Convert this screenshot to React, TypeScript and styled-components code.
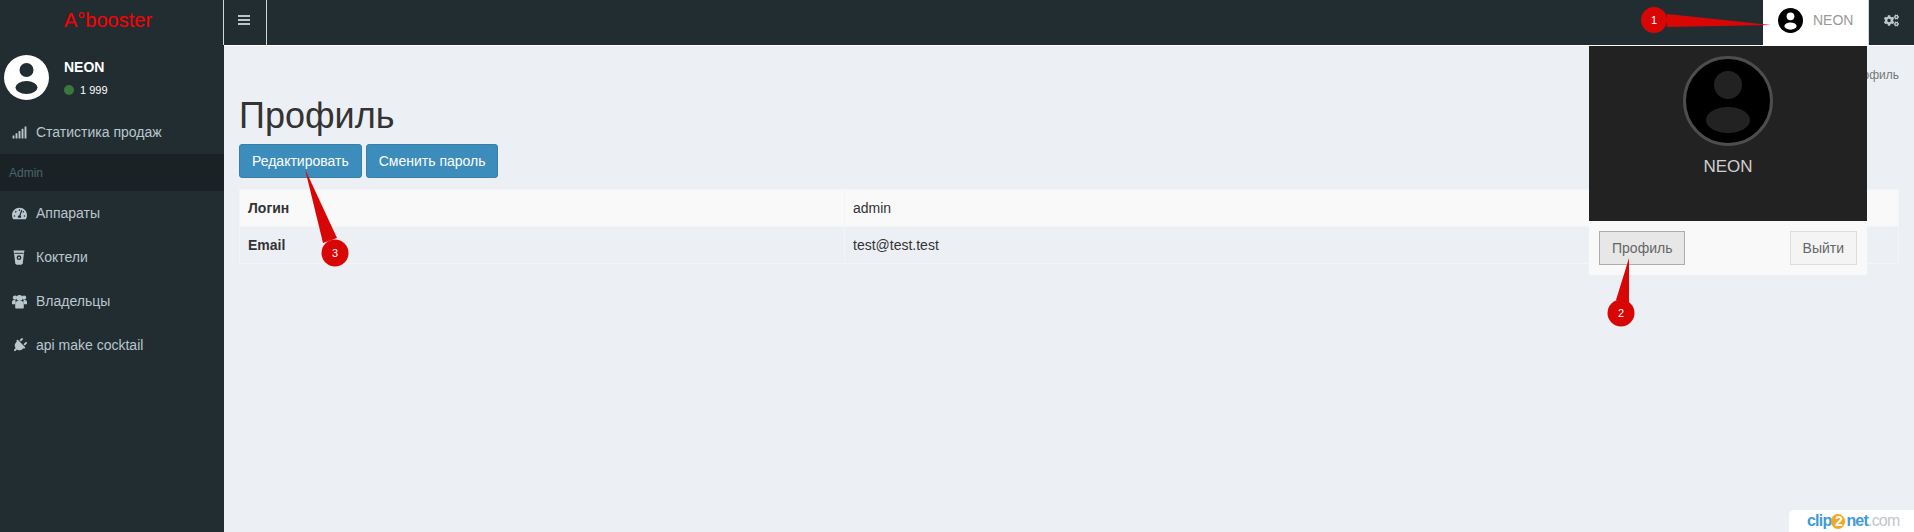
import React from 'react'
import styled, { createGlobalStyle } from 'styled-components'
import { FaCogs, FaPlug, FaSignal, FaTachometerAlt } from 'react-icons/fa'

const GlobalStyle = createGlobalStyle`
  html, body {
    margin: 0;
    padding: 0;
    height: 100%;
    overflow: hidden;
    background: #ecf0f5;
  }
  body {
    font-family: "Liberation Sans", Arial, sans-serif;
    font-size: 14px;
    color: #333;
  }
`

const Page = styled.div`
  position: relative;
  width: 1914px;
  height: 532px;
  display: flex;
  overflow: hidden;
`

const Sidebar = styled.aside`
  width: 224px;
  flex-shrink: 0;
  background: #222d32;
  display: flex;
  flex-direction: column;
`

const Logo = styled.div`
  height: 45px;
  padding-left: 64px;
  padding-bottom: 5px;
  box-sizing: border-box;
  display: flex;
  align-items: center;
  color: #ff0000;
  font-size: 20px;
`

const UserPanel = styled.div`
  height: 65px;
  display: flex;
  padding: 10px 0 0 4px;
  box-sizing: border-box;
  gap: 15px;
`

const UserInfo = styled.div`
  display: flex;
  flex-direction: column;
  padding-top: 4px;
  gap: 8px;
`

const UserName = styled.div`
  color: #fff;
  font-weight: 700;
  font-size: 14px;
  line-height: 16px;
`

const Status = styled.div`
  display: flex;
  align-items: center;
  gap: 6px;
  color: #fff;
  font-size: 11px;
  line-height: 14px;
`

const Dot = styled.span`
  width: 10px;
  height: 10px;
  border-radius: 50%;
  background: #3c763d;
`

const MenuItem = styled.div`
  height: 44px;
  display: flex;
  align-items: center;
  color: #b8c7ce;
  font-size: 14px;
  padding-left: 12px;
  box-sizing: border-box;
`

const MenuIcon = styled.span<{ $tilt?: boolean }>`
  width: 24px;
  flex-shrink: 0;
  display: flex;
  align-items: center;

  svg {
    width: 15px;
    height: 15px;
    fill: #b8c7ce;
    transform: ${p => (p.$tilt ? 'rotate(45deg)' : 'none')};
  }
`

const MenuHeader = styled.div`
  height: 37px;
  background: #1a2226;
  color: #4b646f;
  font-size: 12px;
  padding-left: 9px;
  display: flex;
  align-items: center;
`

const Main = styled.main`
  flex: 1;
  min-width: 0;
  display: flex;
  flex-direction: column;
`

const TopBar = styled.header`
  height: 45px;
  background: #222d32;
  border-bottom: 1px solid #fff;
  display: flex;
  justify-content: space-between;
`

const Toggle = styled.div`
  width: 44px;
  margin-left: -1px;
  box-sizing: border-box;
  border-left: 1px solid #d2d6de;
  border-right: 1px solid #d2d6de;
  display: flex;
  align-items: center;
  justify-content: center;
  padding-bottom: 5px;
  padding-right: 2px;
`

const Burger = styled.span`
  width: 12px;
  height: 10px;
  box-sizing: border-box;
  border-top: 2px solid #b8c7ce;
  border-bottom: 2px solid #b8c7ce;
  position: relative;

  &::after {
    content: '';
    position: absolute;
    left: 0;
    right: 0;
    top: 2px;
    height: 2px;
    background: #b8c7ce;
  }
`

const TopRight = styled.div`
  display: flex;
`

const UserMenu = styled.div`
  width: 105px;
  background: #fff;
  color: #999;
  display: flex;
  align-items: center;
  padding-left: 15px;
  padding-bottom: 5px;
  box-sizing: border-box;
  gap: 10px;
  font-size: 14px;
`

const GearButton = styled.div`
  width: 46px;
  box-sizing: border-box;
  border-left: 1px solid #d2d6de;
  display: flex;
  align-items: center;
  justify-content: center;
  padding-bottom: 5px;
  color: #b8c7ce;

  svg {
    width: 15px;
    height: 15px;
  }
`

const Content = styled.section`
  padding: 22px 15px 0;
  display: flex;
  flex-direction: column;
`

const Breadcrumb = styled.div`
  text-align: right;
  font-size: 12px;
  line-height: 14px;
  color: #777;
`

const Title = styled.h1`
  margin: 14px 0 8px;
  font-size: 36px;
  font-weight: 400;
  line-height: 40px;
  color: #333;
`

const Actions = styled.div`
  display: flex;
  gap: 4px;
  margin-bottom: 11px;
`

const PrimaryButton = styled.button`
  height: 34px;
  padding: 0 12px;
  border: 1px solid #367fa9;
  border-radius: 3px;
  background: #3c8dbc;
  color: #fff;
  font: 14px "Liberation Sans", Arial, sans-serif;
`

const DetailTable = styled.table`
  width: 100%;
  border-collapse: collapse;
  border: 1px solid #f4f4f4;
  table-layout: fixed;
`

const Row = styled.tr<{ $striped?: boolean }>`
  height: 37px;
  background: ${p => (p.$striped ? '#f9f9f9' : 'transparent')};
`

const HeadCell = styled.th`
  width: 588px;
  padding: 0 8px;
  text-align: left;
  font-weight: 700;
  font-size: 14px;
  color: #333;
  border: 1px solid #f4f4f4;
`

const Cell = styled.td`
  padding: 0 8px;
  font-size: 14px;
  color: #333;
  border: 1px solid #f4f4f4;
`

const Dropdown = styled.div`
  position: absolute;
  left: 1589px;
  top: 46px;
  width: 278px;
`

const DropdownHead = styled.div`
  height: 175px;
  background: #222;
  display: flex;
  flex-direction: column;
  align-items: center;
  box-sizing: border-box;
  padding-top: 10px;
`

const DropdownName = styled.div`
  margin-top: 11px;
  font-size: 17px;
  line-height: 20px;
  color: rgba(255, 255, 255, 0.8);
`

const DropdownFoot = styled.div`
  height: 54px;
  background: #f9f9f9;
  padding: 10px;
  box-sizing: border-box;
  display: flex;
  justify-content: space-between;
`

const FlatButton = styled.button<{ $active?: boolean }>`
  height: 34px;
  padding: 0 12px;
  border: 1px solid ${p => (p.$active ? '#adadad' : '#ddd')};
  background: ${p => (p.$active ? '#e7e7e7' : '#f4f4f4')};
  color: #666;
  font: 14px "Liberation Sans", Arial, sans-serif;
`

const Annotations = styled.svg`
  position: absolute;
  left: 0;
  top: 0;
  pointer-events: none;
`

const Watermark = styled.div`
  position: absolute;
  right: 0;
  bottom: 0;
  width: 125px;
  height: 22px;
  background: #fff;
  border-top-left-radius: 5px;
  display: flex;
  align-items: center;
  padding-left: 18px;
  box-sizing: border-box;
  font-size: 16px;
  font-weight: 700;
  letter-spacing: -0.8px;
  color: #3f9bd8;
`

const WatermarkTwo = styled.span`
  width: 14px;
  height: 15px;
  margin: 0 1px 0 0;
  border-radius: 50%;
  background: #f5a623;
  color: #fff;
  font-size: 14px;
  line-height: 15px;
  text-align: center;
`

const WatermarkDomain = styled.span`
  color: #c2c6cc;
  font-weight: 400;
`

function Avatar(props: { size: number; disc: string; figure: string }) {
  return (
    <svg width={props.size} height={props.size} viewBox="0 0 90 90">
      <circle cx="45" cy="45" r="45" fill={props.disc} />
      <circle cx="45" cy="30" r="14" fill={props.figure} />
      <ellipse cx="45" cy="65" rx="22" ry="13" fill={props.figure} />
    </svg>
  )
}

function CupIcon() {
  return (
    <svg viewBox="0 0 15 15">
      <path d="M1.5 0.5h11l-0.6 3-1.2 10.2-1.4 1H4.7l-1.4-1L2.1 3.5z" />
      <circle cx="7" cy="7.7" r="2.4" fill="#222d32" />
      <circle cx="7" cy="7.7" r="1" />
      <rect x="2.5" y="2.8" width="9" height="1" fill="#222d32" />
    </svg>
  )
}

function UsersIcon() {
  return (
    <svg viewBox="0 0 15 15">
      <circle cx="3" cy="3.6" r="2.2" />
      <circle cx="12" cy="3.6" r="2.2" />
      <circle cx="7.5" cy="4" r="3" />
      <path d="M0 10.2V8c0-1.3 1-2 2-2h1.2l0.6 2-1 2.2z" />
      <path d="M15 10.2V8c0-1.3-1-2-2-2h-1.2l-0.6 2 1 2.2z" />
      <path d="M3.2 13.5V9.6c0-1.6 1.2-2.6 2.6-2.6h3.4c1.4 0 2.6 1 2.6 2.6v3.9c0 .6-.5 1-1 1H4.2c-.5 0-1-.4-1-1z" />
    </svg>
  )
}

function Callout(props: { points: string; cx: number; cy: number; r: number; label: string }) {
  return (
    <g>
      <polygon points={props.points} fill="#d90606" />
      <circle cx={props.cx} cy={props.cy} r={props.r} fill="#d90606" />
      <text x={props.cx} y={props.cy + 4} fill="#fff" fontSize="11" fontFamily="Liberation Sans, sans-serif" textAnchor="middle">
        {props.label}
      </text>
    </g>
  )
}

export default function App() {
  return (
    <Page>
      <GlobalStyle />
      <Sidebar>
        <Logo>A°booster</Logo>
        <UserPanel>
          <Avatar size={45} disc="#fff" figure="#222d32" />
          <UserInfo>
            <UserName>NEON</UserName>
            <Status>
              <Dot />1 999
            </Status>
          </UserInfo>
        </UserPanel>
        <MenuItem>
          <MenuIcon><FaSignal /></MenuIcon>
          Статистика продаж
        </MenuItem>
        <MenuHeader>Admin</MenuHeader>
        <MenuItem>
          <MenuIcon><FaTachometerAlt /></MenuIcon>
          Аппараты
        </MenuItem>
        <MenuItem>
          <MenuIcon><CupIcon /></MenuIcon>
          Коктели
        </MenuItem>
        <MenuItem>
          <MenuIcon><UsersIcon /></MenuIcon>
          Владельцы
        </MenuItem>
        <MenuItem>
          <MenuIcon $tilt><FaPlug /></MenuIcon>
          api make cocktail
        </MenuItem>
      </Sidebar>
      <Main>
        <TopBar>
          <Toggle><Burger /></Toggle>
          <TopRight>
            <UserMenu>
              <Avatar size={25} disc="#000" figure="#fff" />
              NEON
            </UserMenu>
            <GearButton><FaCogs /></GearButton>
          </TopRight>
        </TopBar>
        <Content>
          <Breadcrumb>Профиль</Breadcrumb>
          <Title>Профиль</Title>
          <Actions>
            <PrimaryButton>Редактировать</PrimaryButton>
            <PrimaryButton>Сменить пароль</PrimaryButton>
          </Actions>
          <DetailTable>
            <tbody>
              <Row $striped>
                <HeadCell>Логин</HeadCell>
                <Cell>admin</Cell>
              </Row>
              <Row>
                <HeadCell>Email</HeadCell>
                <Cell>test@test.test</Cell>
              </Row>
            </tbody>
          </DetailTable>
        </Content>
      </Main>
      <Dropdown>
        <DropdownHead>
          <svg width="90" height="90" viewBox="0 0 90 90">
            <circle cx="45" cy="45" r="43.5" fill="#000" stroke="#4d4d4d" strokeWidth="3" />
            <circle cx="45" cy="29" r="14" fill="#222" />
            <ellipse cx="45" cy="64" rx="22" ry="13" fill="#222" />
          </svg>
          <DropdownName>NEON</DropdownName>
        </DropdownHead>
        <DropdownFoot>
          <FlatButton $active>Профиль</FlatButton>
          <FlatButton>Выйти</FlatButton>
        </DropdownFoot>
      </Dropdown>
      <Annotations width="1914" height="532">
        <Callout points="1667,14 1771,25 1667,27" cx={1654} cy={20} r={13} label="1" />
        <Callout points="1629,258 1616,300 1629,302" cx={1621} cy={313} r={13.5} label="2" />
        <Callout points="305,169 323,243 337,238" cx={335} cy={253} r={13.5} label="3" />
      </Annotations>
      <Watermark>
        clip<WatermarkTwo>2</WatermarkTwo>net<WatermarkDomain>.com</WatermarkDomain>
      </Watermark>
    </Page>
  )
}
